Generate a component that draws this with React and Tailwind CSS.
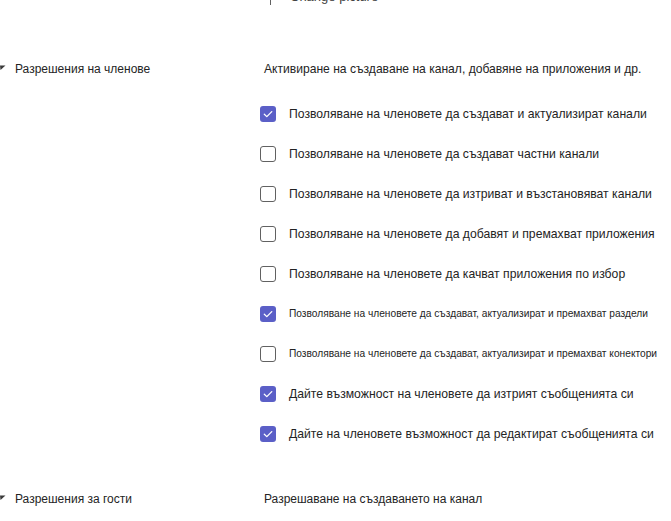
const ITEMS = [
  { t: "Позволяване на членовете да създават и актуализират канали", on: true },
  { t: "Позволяване на членовете да създават частни канали", on: false },
  { t: "Позволяване на членовете да изтриват и възстановяват канали", on: false },
  { t: "Позволяване на членовете да добавят и премахват приложения", on: false },
  { t: "Позволяване на членовете да качват приложения по избор", on: false },
  { t: "Позволяване на членовете да създават, актуализират и премахват раздели", on: true, small: true },
  { t: "Позволяване на членовете да създават, актуализират и премахват конектори", on: false, small: true },
  { t: "Дайте възможност на членовете да изтрият съобщенията си", on: true },
  { t: "Дайте на членовете възможност да редактират съобщенията си", on: true },
];

// little expanded-section caret at the far left edge
function Caret() {
  return (
    <svg width="6" height="6" viewBox="0 0 6 6" className="shrink-0 -mt-[3px]">
      <path d="M0 0.5 L5.5 0.5 L0.5 5 Z" fill="#3a3a3a" />
    </svg>
  );
}

function Box({ on }) {
  if (on)
    return (
      <span className="w-4 h-4 rounded-[3px] bg-[#5b5fc7] shrink-0">
        <svg width="16" height="16" viewBox="0 0 16 16">
          <path d="M4.3 8.2 L6.8 10.6 L11.8 5.6" fill="none" stroke="#fff" strokeWidth="1.3" strokeLinecap="round" strokeLinejoin="round" />
        </svg>
      </span>
    );
  return <span className="w-4 h-4 rounded-[3px] border border-[#616161] bg-white shrink-0" />;
}

export default function App() {
  return (
    <div className="w-[671px] h-[521px] overflow-hidden bg-white text-[#242424] whitespace-nowrap" style={{ fontFamily: '"Liberation Sans", Arial, sans-serif' }}>
      {/* cut-off change picture row */}
      <div className="flex items-start h-[6px]">
        <span className="ml-[270px] w-px h-[5px] bg-[#616161] shrink-0" />
        <span className="ml-[19px] -mt-[11px] text-[13px] leading-4 text-[#424242]">Change picture</span>
      </div>

      <div className="flex mt-[54px]">
        <div className="w-[264px] shrink-0 flex items-center gap-[9px] h-[18px] text-[12px]">
          <Caret />
          Разрешения на членове
        </div>
        <div className="flex flex-col">
          <div className="h-[18px] flex items-center text-[12.1px]">Активиране на създаване на канал, добавяне на приложения и др.</div>
          <div className="flex flex-col gap-[24px] mt-[28px] -ml-[4px]">
            {ITEMS.map((it) => (
              <div key={it.t} className="flex items-center gap-[13px] h-4">
                <Box on={it.on} />
                <span className={it.small ? "text-[10.2px]" : "text-[12.2px]"}>{it.t}</span>
              </div>
            ))}
          </div>
        </div>
      </div>

      <div className="flex mt-[48px]">
        <div className="w-[264px] shrink-0 flex items-center gap-[9px] h-[18px] text-[12px]">
          <Caret />
          Разрешения за гости
        </div>
        <div className="h-[18px] flex items-center text-[12px]">Разрешаване на създаването на канал</div>
      </div>
    </div>
  );
}
